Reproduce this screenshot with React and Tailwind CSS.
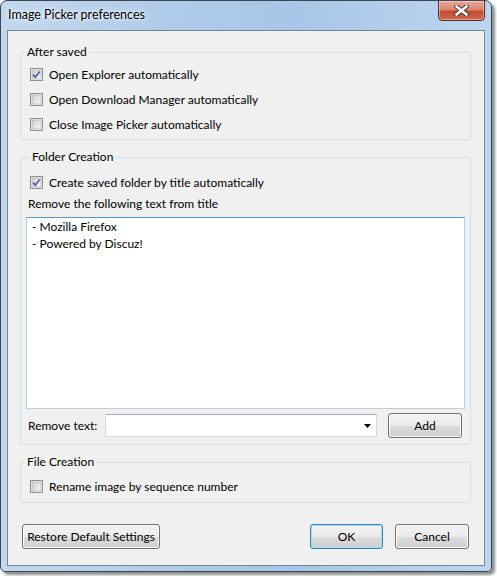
const font = { fontFamily: 'Lato, "Noto Sans", "Liberation Sans", sans-serif' };

function CheckBox({ checked }) {
  return (
    <svg width="13" height="13" viewBox="0 0 13 13" className="shrink-0">
      <defs>
        <linearGradient id="cbg" x1="0" y1="0" x2="1" y2="1">
          <stop offset="0" stopColor="#cfcfcf" />
          <stop offset="1" stopColor="#f7f7f7" />
        </linearGradient>
      </defs>
      <rect x="0.5" y="0.5" width="12" height="12" fill="#f4f4f4" stroke="#8e8f8f" />
      <rect x="2" y="2" width="9" height="9" fill="url(#cbg)" stroke="#a7a7a7" strokeWidth="0.6" />
      {checked && (
        <path d="M3.2 6.6 L5.3 9.2 L9.8 3.4" fill="none" stroke="#4a5f97" strokeWidth="1.7" strokeLinejoin="miter" />
      )}
    </svg>
  );
}

function Check({ checked, label }) {
  return (
    <div className="flex items-center h-[25px] pl-[9px] gap-[6px]">
      <CheckBox checked={checked} />
      <span className="text-[12px] text-black leading-none whitespace-nowrap">{label}</span>
    </div>
  );
}

function Group({ title, className = '', children }) {
  return (
    <fieldset className={`border border-[#d5dfe5] rounded-[3px] ml-[12px] w-[451px] ${className}`}>
      <legend className="ml-[4px] px-[2px] text-[12px] leading-[16px] text-black">{title}</legend>
      {children}
    </fieldset>
  );
}

function WinButton({ children, className = '', focused }) {
  return (
    <button
      className={`h-[25px] rounded-[3px] border text-[12px] text-black whitespace-nowrap ${
        focused
          ? 'border-[#3c7fb1] shadow-[inset_0_0_0_1px_#9ee3fb] bg-[linear-gradient(#f2f2f2_0%,#ebebeb_50%,#dddddd_51%,#cfcfcf_100%)]'
          : 'border-[#707070] shadow-[inset_0_0_0_1px_#fbfbfb] bg-[linear-gradient(#f2f2f2_0%,#ebebeb_50%,#dddddd_51%,#cfcfcf_100%)]'
      } ${className}`}
    >
      {children}
    </button>
  );
}

export default function App() {
  return (
    <div className="w-[497px] h-[576px] bg-white" style={font}>
      <div className="w-[492px] h-[572px] rounded-t-[7px] rounded-b-[5px] border border-[#3d4650] bg-[linear-gradient(90deg,#c3d8ee_0%,#aecbe9_35%,#a7c6e7_60%,#bdd6ef_100%)] shadow-[3px_3px_3px_rgba(0,0,0,0.45)] flex flex-col overflow-hidden">
        <div className="h-[29px] relative flex items-start">
          <span className="pl-[7px] pt-[6px] text-[12.5px] leading-[16px] text-black [text-shadow:0_0_6px_#ffffff,0_0_3px_#ffffff]">
            Image Picker preferences
          </span>
          <div className="absolute left-[437px] top-[-1px] w-[47px] h-[21px] rounded-b-[4px] border border-[#5d2c22] bg-[linear-gradient(#e9a99a_0%,#d98670_45%,#c24a2f_55%,#d0694f_100%)] shadow-[inset_0_0_0_1px_rgba(255,220,210,0.5)] flex items-center justify-center">
            <svg width="15" height="11" viewBox="0 0 15 11">
              <path d="M2.5 1.5 L12.5 9.5 M12.5 1.5 L2.5 9.5" stroke="#4a2a24" strokeWidth="4.4" strokeLinecap="square" />
              <path d="M2.5 1.5 L12.5 9.5 M12.5 1.5 L2.5 9.5" stroke="#ffffff" strokeWidth="2.6" strokeLinecap="square" />
            </svg>
          </div>
        </div>
        <div className="mx-[6px] mb-[5px] flex-1 border border-[#76869a] bg-[#f0f0f0] flex flex-col">
          <Group title="After saved" className="mt-[13px] h-[96px] pt-[2px]">
            <Check checked label="Open Explorer automatically" />
            <Check label="Open Download Manager automatically" />
            <Check label="Close Image Picker automatically" />
          </Group>

          <Group title="Folder Creation" className="mt-[9px] h-[296px] px-[5px]">
            <div className="pt-[5px] -ml-[5px]">
              <Check checked label="Create saved folder by title automatically" />
            </div>
            <div className="pl-[2px] h-[16px] leading-[16px] text-[12px] text-black mt-[1px]">
              Remove the following text from title
            </div>
            <div className="mt-[5px] h-[192px] bg-white border border-[#b5cfe7] border-t-[#5c93c8] px-[5px] text-[12px] leading-[17px] text-black">
              <div>- Mozilla Firefox</div>
              <div>- Powered by Discuz!</div>
            </div>
            <div className="mt-[4px] flex items-center h-[25px]">
              <span className="pl-[2px] w-[79px] text-[12px] text-black">Remove text:</span>
              <div className="w-[272px] h-[23px] bg-white border border-[#d6d9de] border-t-[#abadb3] flex items-center justify-end pr-[5px]">
                <svg width="7" height="4" viewBox="0 0 7 4">
                  <path d="M0 0 L7 0 L3.5 4 Z" fill="#000" />
                </svg>
              </div>
              <WinButton className="ml-[11px] w-[74px]">Add</WinButton>
            </div>
          </Group>

          <Group title="File Creation" className="mt-[9px] h-[49px]">
            <div className="pt-[4px]">
              <Check label="Rename image by sequence number" />
            </div>
          </Group>

          <div className="mt-[21px] flex items-center pl-[14px]">
            <WinButton className="w-[138px]">Restore Default Settings</WinButton>
            <WinButton focused className="ml-[150px] w-[73px]">OK</WinButton>
            <WinButton className="ml-[12px] w-[74px]">Cancel</WinButton>
          </div>
        </div>
      </div>
    </div>
  );
}
